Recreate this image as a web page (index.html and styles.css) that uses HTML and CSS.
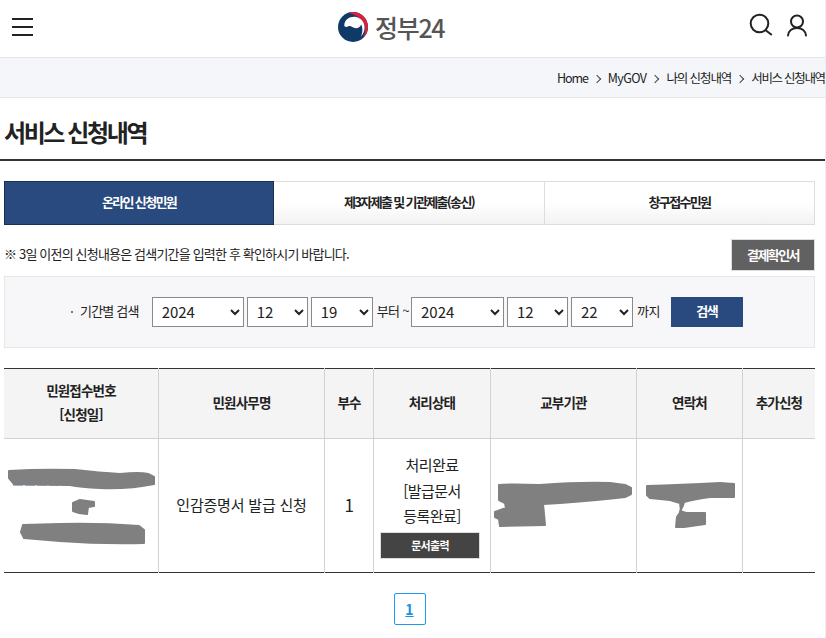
FILE: index.html
```html
<!DOCTYPE html>
<html lang="ko">
<head>
<meta charset="utf-8">
<title>서비스 신청내역</title>
<link rel="stylesheet" href="styles.css">
</head>
<body>
<div class="page">
  <header class="top">
    <button class="menu" aria-label="메뉴"><span></span><span></span><span></span></button>
    <div class="logo">
      <svg class="mark" viewBox="0 0 30 30" width="30" height="30" aria-hidden="true">
        <circle cx="15" cy="15" r="15" fill="#0f3a68"/>
        <path d="M10 .9C12 .2 13.500 0 15 0 23.300 0 30 6.700 30 15 30 19.500 28 23.500 25 26 27 22.500 27.500 18 26.800 14.500 25.500 8.500 19.500 2.500 10 .9Z" fill="#d9213f"/>
        <path d="M6.300 13.500C6.300 7.500 12.500 4 18 5 23.500 6 26.800 11 26.600 16 26.400 19.500 25 22.500 23 24.500 24.600 21 25 16.500 23.300 12.500 21.800 15.800 18.500 17 15.500 15.500 13 14.200 11.500 13.500 10 14.500 8.800 15.300 6.500 15 6.300 13.500Z" fill="#fff"/>
      </svg>
      <span class="logo-text">정부24</span>
    </div>
    <div class="tools">
      <svg viewBox="0 0 24 24" width="24" height="24" aria-hidden="true" class="tool">
        <circle cx="10.500" cy="10.500" r="8.800" fill="none" stroke="#222" stroke-width="2"/>
        <path d="M17 17.500L22.200 21.500" fill="none" stroke="#222" stroke-width="2" stroke-linecap="round"/>
      </svg>
      <svg viewBox="0 0 24 24" width="24" height="24" aria-hidden="true" class="tool">
        <circle cx="12" cy="8.500" r="6" fill="none" stroke="#222" stroke-width="2"/>
        <path d="M3 22.500C3.500 18 7 15 12 15S20.500 18 21 22.500" fill="none" stroke="#222" stroke-width="2" stroke-linecap="round"/>
      </svg>
    </div>
  </header>

  <nav class="crumbs">
    <span>Home</span><i class="chev"></i><span class="latin">MyGOV</span><i class="chev"></i><span>나의 신청내역</span><i class="chev"></i><span class="current">서비스 신청내역</span>
  </nav>

  <h1 class="title">서비스 신청내역</h1>

  <main class="content">
    <div class="tabs">
      <a class="tab active">온라인 신청민원</a>
      <a class="tab">제3자제출 및 기관제출(송신)</a>
      <a class="tab">창구접수민원</a>
    </div>

    <div class="notice">
      <p>※ 3일 이전의 신청내용은 검색기간을 입력한 후 확인하시기 바랍니다.</p>
      <button class="receipt">결제확인서</button>
    </div>

    <form class="search">
      <span class="label">기간별 검색</span>
      <select class="sel year"><option>2024</option></select>
      <select class="sel short"><option>12</option></select>
      <select class="sel short"><option>19</option></select>
      <span class="word">부터 ~</span>
      <select class="sel year"><option>2024</option></select>
      <select class="sel short"><option>12</option></select>
      <select class="sel short"><option>22</option></select>
      <span class="word">까지</span>
      <button type="button" class="go">검색</button>
    </form>

    <div class="table-wrap">
      <table class="list">
        <colgroup>
          <col class="c1"><col class="c2"><col class="c3"><col class="c4"><col class="c5"><col class="c6"><col class="c7">
        </colgroup>
        <thead>
          <tr>
            <th>민원접수번호<br>[신청일]</th>
            <th>민원사무명</th>
            <th>부수</th>
            <th>처리상태</th>
            <th>교부기관</th>
            <th>연락처</th>
            <th>추가신청</th>
          </tr>
        </thead>
        <tbody>
          <tr>
            <td></td>
            <td>인감증명서 발급 신청</td>
            <td class="num">1</td>
            <td class="status">처리완료<br>[발급문서<br>등록완료]<button class="print">문서출력</button></td>
            <td></td>
            <td></td>
            <td></td>
          </tr>
        </tbody>
      </table>
      <svg class="redact" viewBox="4 368 811 206" aria-hidden="true">
        <path class="speck" d="M13 485H70"/>
        <path d="M9 471Q40 469 75 470 100 473 120 474 140 472 148 474L154 477V484Q130 489 100 488 80 487 70 485L14 484 9 478Z"/>
        <path d="M73 503L80 500 94 502V506L88 507 87 514 79 513 73 511Z"/>
        <path d="M23 525L60 524Q100 523 139 526L144 530V543Q100 544 60 541L24 538 21 532Z"/>
        <path d="M499 485Q510 484 540 485 580 482 610 483L625 485 631 488V494L625 497Q600 500 560 503L543 504 544 514 545 525 500 526 499 519 495 517V512L506 508 505 503 499 500Z"/>
        <path d="M647 486Q680 485 720 483L734 484V497H710Q695 499 684 502 683 507 680 511L686 513H705V524L684 527H676L677 517 681 511 680 503 670 500 650 498 647 495Z"/>
      </svg>
    </div>

    <div class="pages"><a class="page-no">1</a></div>
  </main>
</div>
</body>
</html>
```

FILE: styles.css
```css
* { box-sizing: border-box; }
html, body { margin: 0; padding: 0; height: 638px; overflow: hidden; background: #fff; }
body { font-family: "Noto Sans CJK KR", "Noto Sans", sans-serif; color: #222; }
.page { width: 826px; height: 638px; border-right: 1px solid #eee; overflow: hidden; }

.top { position: relative; height: 58px; display: flex; align-items: center; justify-content: space-between; border-bottom: 1px solid #e4e4ea; padding: 0 16px 4px 12px; }
.menu { width: 21px; height: 18px; padding: 0; border: 0; background: none; display: flex; flex-direction: column; justify-content: space-between; }
.menu span { display: block; height: 2px; background: #222; }
.logo { position: absolute; left: 338px; top: 12px; display: flex; align-items: center; gap: 7px; }
.logo-text { font-size: 25px; line-height: 30px; letter-spacing: -1.300px; color: #555; font-weight: 500; }
.tools { display: flex; gap: 12px; margin-top: -4px; }
.tool { display: block; }

.crumbs { height: 40px; background: #f5f6fa; border-bottom: 1px solid #e4e4ea; display: flex; align-items: center; padding-left: 557px; font-size: 12.500px; letter-spacing: -1.100px; color: #222; white-space: nowrap; overflow: hidden; }
.chev { width: 6px; height: 6px; border-top: 1px solid #444; border-right: 1px solid #444; transform: rotate(45deg); margin: 2px 8px 0 6px; flex: none; }
.latin { letter-spacing: -.6px; }
.current { letter-spacing: -1.300px; }

.title { margin: 0; height: 63px; padding: 17px 0 0 4px; font-size: 24px; line-height: 34px; font-weight: 700; letter-spacing: -2.400px; color: #222; border-bottom: 2px solid #333; }

.content { padding: 20px 10px 0 4px; }

.tabs { display: grid; grid-template-columns: 270px 271px 270px; height: 44px; }
.tab { display: flex; align-items: center; justify-content: center; padding-bottom: 3px; font-size: 13px; font-weight: 700; letter-spacing: -1.650px; color: #222; border: 1px solid #ddd; border-left: 0; background: linear-gradient(#fff 50%, #f2f2f2); }
.tab.active { background: #294a7e; color: #fff; border: 1px solid #1a2f52; }

.notice { display: flex; align-items: center; justify-content: space-between; margin-top: 14px; height: 32px; }
.notice p { margin: -4px 0 0; font-size: 13px; letter-spacing: -.820px; color: #222; }
.receipt { width: 84px; height: 32px; background: #616161; border: 1px solid #ddd; color: #fff; font: 700 13px "Noto Sans CJK KR", sans-serif; letter-spacing: -1.600px; padding: 0 0 2px; }

.search { margin-top: 5px; height: 72px; background: #f7f7f9; border: 1px solid #e6e6e6; display: flex; align-items: center; padding: 0 0 0 66px; }
.label { font-size: 13px; letter-spacing: -.8px; color: #222; position: relative; margin: -3px 13px 0 0; padding-left: 9px; }
.label::before { content: ""; position: absolute; left: 0; top: 55%; width: 2px; height: 2px; background: #555; border-radius: 50%; }
.sel { height: 30px; border: 1px solid #8a8a8a; background-color: #fff; font: 15px "Noto Sans CJK KR", sans-serif; color: #222; padding: 0 0 2px 5px; margin-right: 3px; }
.year { width: 92px; }
.word + .year { width: 93px; }
.short { width: 61px; }
.short + .short { width: 62px; }
.word { font-size: 13px; letter-spacing: -.6px; color: #222; margin: -4px 2px 0 1px; white-space: nowrap; }
.go { width: 72px; height: 30px; margin-left: 9px; background: #294a7e; color: #fff; border: 0; font: 700 13px "Noto Sans CJK KR", sans-serif; letter-spacing: -1.500px; padding: 0 0 3px; }

.table-wrap { position: relative; margin-top: 20px; }
.list { width: 811px; table-layout: fixed; border-collapse: collapse; border-top: 1px solid #333; border-bottom: 1px solid #333; }
.c1 { width: 154.5px; } .c2 { width: 166px; } .c3 { width: 49px; } .c4 { width: 117px; } .c5 { width: 146px; } .c6 { width: 106px; } .c7 { width: 72.5px; }
.list th, .list td { border-left: 1px solid #d2d2d2; text-align: center; padding: 0; }
.list th:first-child, .list td:first-child { border-left: 0; }
.list th { height: 70px; background: #f4f4f4; border-bottom: 1px solid #d2d2d2; font-size: 13.500px; line-height: 23.500px; font-weight: 700; letter-spacing: -.8px; color: #222; padding-bottom: 2px; }
.list td { height: 134px; font-size: 15px; letter-spacing: -.2px; color: #222; padding-bottom: 3px; }
.list .num { font-size: 17px; }
.list .status { line-height: 25.500px; letter-spacing: -.6px; padding: 13px 0 0; vertical-align: top; }
.print { display: block; width: 100px; height: 27px; margin: 3px 0 0 6px; background: #444; color: #fff; border: 1px solid #ddd; font: 700 11px "Noto Sans CJK KR", sans-serif; letter-spacing: -.7px; padding: 0; }
.redact { position: absolute; inset: 0; width: 811px; height: 206px; pointer-events: none; }
.redact path { fill: #808080; stroke: #808080; stroke-width: 2; stroke-linejoin: round; }
.redact .speck { fill: none; stroke: #3a6aa8; stroke-width: 1; stroke-dasharray: 10 2; }

.pages { display: flex; justify-content: center; margin-top: 20px; }
.page-no { width: 32px; height: 32px; border: 1px solid #1a9bee; border-radius: 2px; display: flex; align-items: center; justify-content: center; font-size: 14px; font-weight: 700; color: #1a8fe3; text-decoration: underline; }
```
